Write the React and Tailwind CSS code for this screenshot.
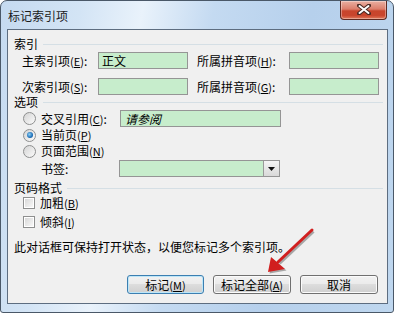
import React from "react";

function Key({ k }) {
  return (
    <span className="text-[11px]">
      (<span className="underline">{k}</span>)
    </span>
  );
}

function Header({ title }) {
  return (
    <div className="flex h-[12px] items-center">
      <span className="leading-[12px]">{title}</span>
      <div className="ml-[5px] h-px flex-1 bg-[#d5dfe5]" />
    </div>
  );
}

function Field({ className = "", children }) {
  return (
    <div
      className={`flex h-[17px] items-center border border-[#959595] bg-[#c7edcc] ${className}`}
    >
      {children}
    </div>
  );
}

function Radio({ checked }) {
  return (
    <div className="flex h-[13px] w-[13px] items-center justify-center rounded-full border border-[#8e8f8f] bg-[linear-gradient(135deg,#d4d4d4,#fbfbfb)]">
      {checked && (
        <div className="h-[6px] w-[6px] rounded-full bg-[radial-gradient(circle_at_40%_40%,#8fd0f5,#1d6fb8_60%,#0f4f8f)]" />
      )}
    </div>
  );
}

function Check() {
  return (
    <div className="h-[12px] w-[12px] border border-[#8e8f8f] bg-white p-px">
      <div className="h-full w-full bg-[linear-gradient(135deg,#d8d8d8,#f7f7f7)]" />
    </div>
  );
}

function Btn({ w, focus, children }) {
  return (
    <div
      className={`flex h-[19px] items-center justify-center rounded-[3px] border bg-[linear-gradient(to_bottom,#f2f2f2_0%,#ebebeb_45%,#dddddd_50%,#cfcfcf_100%)] ${w} ${
        focus
          ? "border-[#3c7fb1] shadow-[inset_0_0_0_1px_#bde6f8]"
          : "border-[#707070] shadow-[inset_0_0_0_1px_#fbfbfb]"
      }`}
    >
      {children}
    </div>
  );
}

export default function App() {
  return (
    <div className="relative h-[313px] w-[394px] overflow-hidden bg-white font-['Noto_Sans_CJK_SC','Noto_Sans',sans-serif] text-[12px] leading-[12px] text-black">
      <div className="flex h-full flex-col rounded-t-[7px] rounded-b-[3px] border border-[#4a5868] bg-[linear-gradient(100deg,#c5daf0_0%,#d3e4f5_18%,#e9f2fb_32%,#c4daf1_48%,#b6d0ec_70%,#bfd7ef_100%)]">
        {/* title bar */}
        <div className="flex h-[28px] shrink-0 items-center justify-between">
          <span className="pl-[7px] pt-[1px] text-[#1b1b1b]">标记索引项</span>
          <div className="-mt-[10px] mr-[6px] flex h-[19px] w-[47px] items-center justify-center rounded-b-[4px] border border-t-0 border-[#5e2a22] bg-[linear-gradient(to_bottom,#eab0a2_0%,#dc7e6b_45%,#c8452c_55%,#c9452d_80%,#e07a5c_100%)] shadow-[inset_0_0_0_1px_rgba(255,255,255,0.35)]">
            <svg width="14" height="11" viewBox="0 0 14 11">
              <path d="M2 1.5 L12 9.5 M12 1.5 L2 9.5" stroke="#4a2a24" strokeWidth="4" strokeLinecap="round" />
              <path d="M2.5 2 L11.5 9 M11.5 2 L2.5 9" stroke="#ffffff" strokeWidth="2" strokeLinecap="round" />
            </svg>
          </div>
        </div>

        {/* client area */}
        <div className="ml-[6px] h-[275px] w-[381px] border border-[#5d6d80] bg-[#f0f0f0]">
          <div className="flex flex-col pl-[6px] pr-[4px] pt-[8px]">
            <Header title="索引" />
            <div className="mt-[2px] flex h-[17px] items-center pl-[8px]">
              <span className="w-[76px]">
                主索引项<Key k="E" />:
              </span>
              <Field className="w-[90px] pl-[3px]">正文</Field>
              <span className="ml-[9px] w-[92px]">
                所属拼音项<Key k="H" />:
              </span>
              <Field className="w-[90px]" />
            </div>
            <div className="mt-[9px] flex h-[17px] items-center pl-[8px]">
              <span className="w-[76px]">
                次索引项<Key k="S" />:
              </span>
              <Field className="w-[90px]" />
              <span className="ml-[9px] w-[92px]">
                所属拼音项<Key k="G" />:
              </span>
              <Field className="w-[90px]" />
            </div>

            <div className="mt-[1px]">
              <Header title="选项" />
            </div>
            <div className="mt-[2px] flex h-[17px] items-center pl-[9px]">
              <Radio />
              <span className="ml-[5px] w-[79px]">
                交叉引用<Key k="C" />:
              </span>
              <Field className="w-[161px] pl-[4px] italic">请参阅</Field>
            </div>
            <div className="flex h-[16px] items-center pl-[9px]">
              <Radio checked />
              <span className="ml-[5px]">
                当前页<Key k="P" />
              </span>
            </div>
            <div className="flex h-[16px] items-center pl-[9px]">
              <Radio />
              <span className="ml-[5px]">
                页面范围<Key k="N" />
              </span>
            </div>
            <div className="mt-[1px] flex h-[17px] items-center pl-[27px]">
              <span className="w-[78px]">书签:</span>
              <div className="flex h-[17px] w-[161px] border border-[#959595] bg-[#c7edcc]">
                <div className="flex-1" />
                <div className="flex w-[16px] items-center justify-center border-l border-[#9a9a9a] bg-[linear-gradient(to_bottom,#f4f4f4,#d9d9d9)]">
                  <svg width="7" height="4" viewBox="0 0 7 4">
                    <path d="M0 0 H7 L3.5 4 Z" fill="#111" />
                  </svg>
                </div>
              </div>
            </div>

            <div className="mt-[5px]">
              <Header title="页码格式" />
            </div>
            <div className="mt-[1px] flex h-[15px] items-center pl-[9px]">
              <Check />
              <span className="ml-[5px]">
                加粗<Key k="B" />
              </span>
            </div>
            <div className="mt-[4px] flex h-[15px] items-center pl-[9px]">
              <Check />
              <span className="ml-[5px]">
                倾斜<Key k="I" />
              </span>
            </div>

            <div className="mt-[12px] h-[12px]">
              此对话框可保持打开状态，以便您标记多个索引项。
            </div>

            <div className="mt-[22px] flex justify-end gap-[9px] pr-[5px]">
              <Btn w="w-[77px]" focus>
                标记<Key k="M" />
              </Btn>
              <Btn w="w-[78px]">
                标记全部<Key k="A" />
              </Btn>
              <Btn w="w-[78px]">取消</Btn>
            </div>
          </div>
        </div>
      </div>

      {/* annotation arrow */}
      <svg
        className="pointer-events-none absolute left-0 top-0"
        width="394"
        height="313"
        viewBox="0 0 394 313"
      >
        <g transform="translate(1.5 1.5)" opacity="0.3">
          <line x1="312" y1="230" x2="278" y2="262" stroke="#000" strokeWidth="3" />
          <polygon points="268,272 271,257 285,269" fill="#000" />
        </g>
        <line x1="312" y1="230" x2="278" y2="262" stroke="#d11f1f" strokeWidth="3" strokeLinecap="round" />
        <polygon points="268,272 271,257 285,269" fill="#d11f1f" />
      </svg>
    </div>
  );
}
